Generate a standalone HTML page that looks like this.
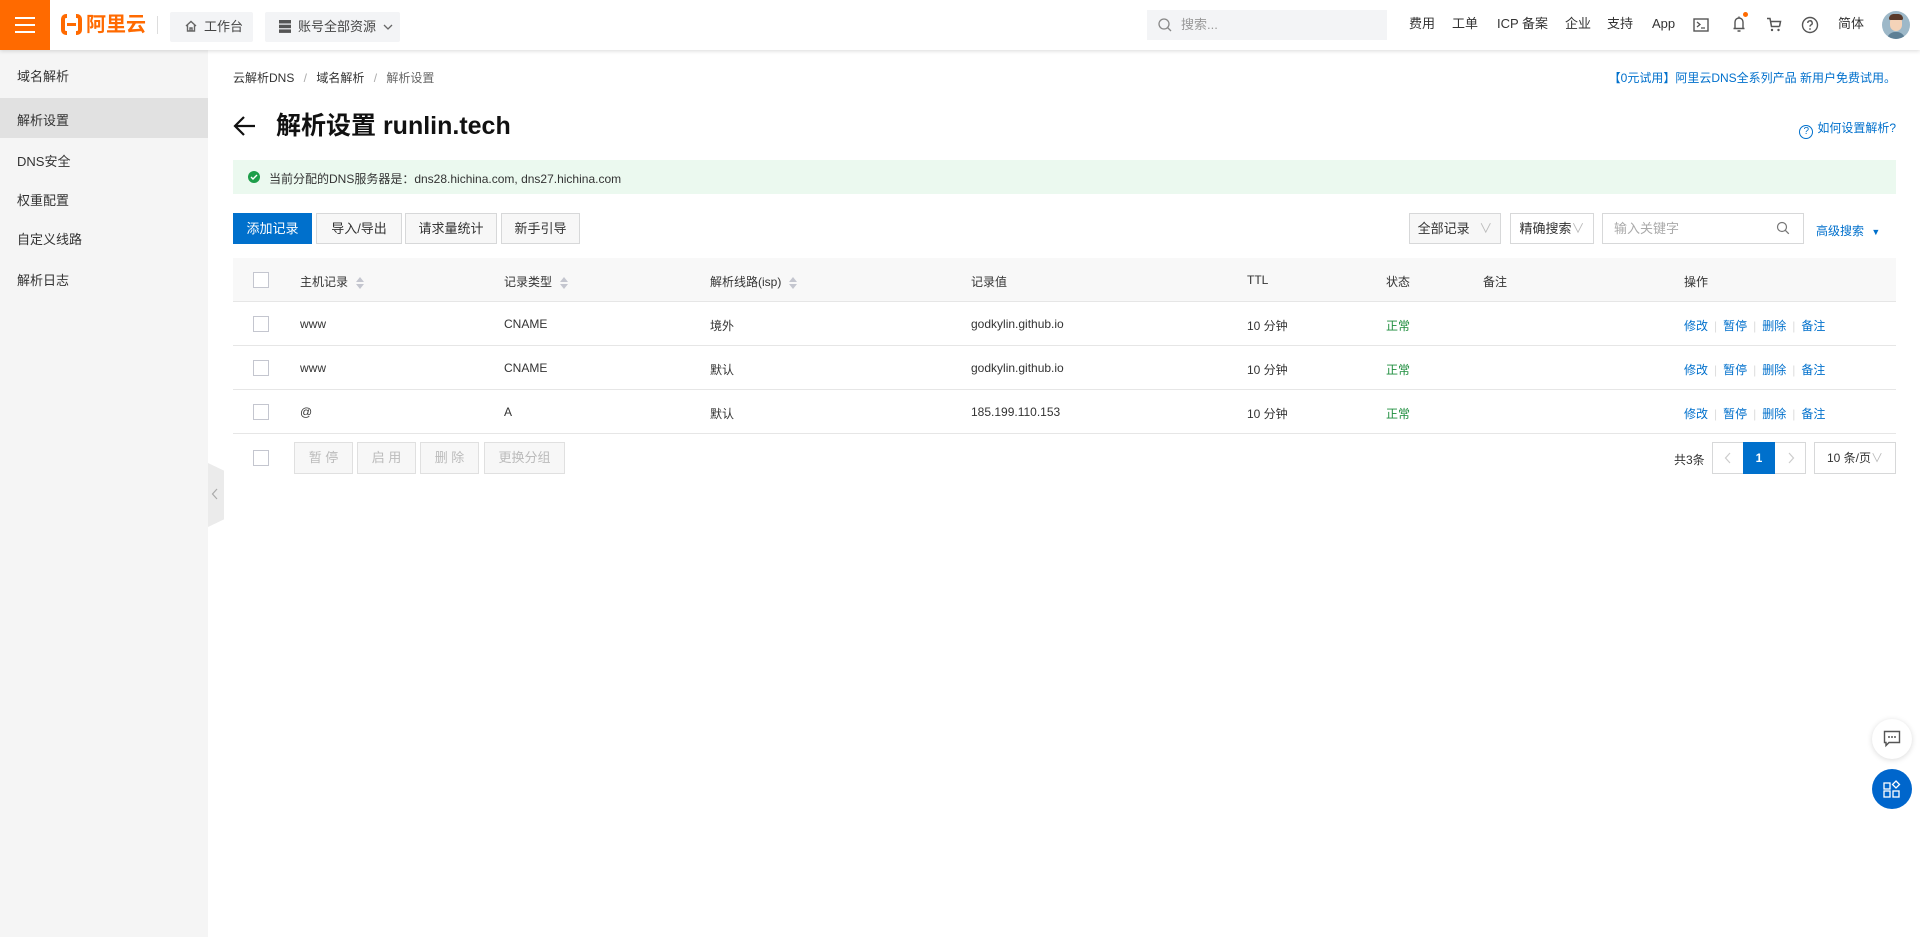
<!DOCTYPE html>
<html><head><meta charset="utf-8">
<style>
*{box-sizing:border-box;margin:0;padding:0}
body{width:1920px;height:937px;overflow:hidden;background:#fff;font-family:"Liberation Sans","Noto Sans CJK SC",sans-serif;font-size:12px;color:#333;position:relative}
.abs{position:absolute}
.top{position:absolute;left:0;top:0;width:1920px;height:50px;background:#fff;box-shadow:0 1px 4px rgba(0,0,0,.15);z-index:5}
.ham{position:absolute;left:0;top:0;width:50px;height:50px;background:#ff6a00}
.ham i{position:absolute;left:15px;width:20px;height:2px;background:#fff}
.tbtn{position:absolute;top:12px;height:30px;background:#f3f4f6;border-radius:2px;font-size:13px;color:#444;line-height:30px}
.nav{position:absolute;top:17px;font-size:13px;color:#333;line-height:14px}
.side{position:absolute;left:0;top:50px;width:208px;height:887px;background:#f5f5f5}
.side div{position:absolute;left:17px;font-size:13px;color:#333}
.btn{position:absolute;top:213px;height:31px;border:1px solid #d7d8d9;background:#f7f7f7;font-size:13px;color:#333;text-align:center;line-height:29px}
.th{position:absolute;top:273px;font-size:12px;color:#333}
.cb{position:absolute;left:253px;width:16px;height:16px;border:1px solid #c4c6cf;background:#fff}
.cell{position:absolute;font-size:12px;color:#333}
.line{position:absolute;left:233px;width:1663px;height:1px;background:#e6e6e6}
.ok{color:#1e8e3e}
.op{position:absolute;left:1684px;font-size:12px;color:#0070cc}
.op span.s{color:#ddd;margin:0 6px}
.sort{display:inline-block;vertical-align:middle;margin-left:8px;width:8px;height:12px;position:relative}
.sort:before{content:"";position:absolute;top:0;left:0;border:4px solid transparent;border-bottom:5px solid #c4c6cf;border-top:0}
.sort:after{content:"";position:absolute;bottom:0;left:0;border:4px solid transparent;border-top:5px solid #c4c6cf;border-bottom:0}
.dbtn{position:absolute;top:442px;height:32px;border:1px solid #e0e0e0;background:#f7f7f7;color:#bbb;font-size:13px;text-align:center;line-height:30px}
</style></head><body>
<div class="top">
  <div class="ham"><i style="top:17px"></i><i style="top:24px"></i><i style="top:31px"></i></div>
  <div class="abs" style="left:61px;top:14px;width:21px;height:21px;border:4px solid #ff6a00;border-radius:5px"></div>
  <div class="abs" style="left:67px;top:14px;width:9px;height:21px;background:#fff"></div>
  <div class="abs" style="left:67px;top:23px;width:9px;height:3px;background:#ff6a00"></div>
  <div class="abs" style="left:86px;top:12px;font-size:20px;font-weight:bold;color:#ff6a00;line-height:26px">阿里云</div>
  <div class="abs" style="left:157px;top:16px;width:1px;height:18px;background:#ddd"></div>
  <div class="tbtn" style="left:170px;width:83px;padding-left:14px"><svg width="14" height="14" viewBox="0 0 14 14" style="vertical-align:-2px;margin-right:6px"><path d="M2 7L7 2.5 12 7M3.5 6v6h7V6M6 12V9h2v3" fill="none" stroke="#666" stroke-width="1.4"/></svg>工作台</div>
  <div class="tbtn" style="left:265px;width:135px;padding-left:14px"><svg width="12" height="13" viewBox="0 0 12 13" style="vertical-align:-2px;margin-right:7px"><rect x="0" y="0" width="12" height="3.5" fill="#555"/><rect x="0" y="4.7" width="12" height="3.5" fill="#555"/><rect x="0" y="9.4" width="12" height="3.5" fill="#555"/></svg>账号全部资源 <svg width="10" height="8" viewBox="0 0 10 8" style="margin-left:3px"><path d="M1 2l4 4 4-4" fill="none" stroke="#666" stroke-width="1.3"/></svg></div>
  <div class="abs" style="left:1147px;top:10px;width:240px;height:30px;background:#f3f4f6;color:#999;font-size:13px;line-height:30px;padding-left:34px">搜索...</div>
  <svg class="abs" style="left:1157px;top:17px" width="16" height="16" viewBox="0 0 16 16"><circle cx="7" cy="7" r="5" fill="none" stroke="#888" stroke-width="1.3"/><path d="M10.5 10.5l3.5 3.5" stroke="#888" stroke-width="1.3"/></svg>
  <div class="nav" style="left:1409px">费用</div>
  <div class="nav" style="left:1452px">工单</div>
  <div class="nav" style="left:1497px">ICP 备案</div>
  <div class="nav" style="left:1565px">企业</div>
  <div class="nav" style="left:1607px">支持</div>
  <div class="nav" style="left:1652px">App</div>
  <svg class="abs" style="left:1693px;top:18px" width="16" height="14" viewBox="0 0 16 14"><rect x="1" y="1" width="14" height="12" fill="none" stroke="#555" stroke-width="1.4"/><path d="M4 4l3 2.5L4 9M8 10h4" fill="none" stroke="#555" stroke-width="1.3"/></svg>
  <svg class="abs" style="left:1731px;top:15px" width="16" height="18" viewBox="0 0 16 18"><path d="M4 13V7a4 4 0 0 1 8 0v6M2.5 13.5h11M6.5 16h3M8 1.5v1.5" fill="none" stroke="#555" stroke-width="1.4"/></svg>
  <div class="abs" style="left:1743px;top:12px;width:5px;height:5px;border-radius:50%;background:#ff6a00"></div>
  <svg class="abs" style="left:1766px;top:17px" width="16" height="15" viewBox="0 0 16 15"><path d="M1 1.5h3l1.5 8h8M5 4.5h9.5l-1 5" fill="none" stroke="#555" stroke-width="1.5"/><circle cx="6" cy="13" r="1.2" fill="#555"/><circle cx="12.5" cy="13" r="1.2" fill="#555"/></svg>
  <svg class="abs" style="left:1801px;top:16px" width="18" height="18" viewBox="0 0 18 18"><circle cx="9" cy="9" r="7.5" fill="none" stroke="#555" stroke-width="1.4"/><path d="M6.8 7a2.2 2.2 0 1 1 3 2c-.7.3-.8.8-.8 1.6" fill="none" stroke="#555" stroke-width="1.4"/><circle cx="9" cy="13" r=".9" fill="#555"/></svg>
  <div class="nav" style="left:1838px">简体</div>
  <div class="abs" style="left:1882px;top:11px;width:28px;height:28px;border-radius:50%;background:#9db8c8;overflow:hidden">
    <div class="abs" style="left:8px;top:5px;width:12px;height:15px;border-radius:6px;background:#f4d3b8"></div>
    <div class="abs" style="left:7px;top:3px;width:14px;height:6px;border-radius:6px 6px 2px 2px;background:#5a3a2a"></div>
    <div class="abs" style="left:5px;top:21px;width:18px;height:10px;border-radius:8px 8px 0 0;background:#5d7f95"></div>
  </div>
</div>

<div class="side">
  <div style="top:16px">域名解析</div>
  <div style="left:0;top:48px;width:208px;height:40px;background:#e1e1e1"></div>
  <div style="top:60px">解析设置</div>
  <div style="top:101px">DNS安全</div>
  <div style="top:140px">权重配置</div>
  <div style="top:179px">自定义线路</div>
  <div style="top:220px">解析日志</div>
</div>
<div class="abs" style="left:208px;top:463px;width:16px;height:64px;background:#ebebeb;clip-path:polygon(0 0,100% 12%,100% 88%,0 100%)"></div>
<svg class="abs" style="left:211px;top:488px" width="8" height="12" viewBox="0 0 8 12"><path d="M6 1L1.5 6 6 11" fill="none" stroke="#aaa" stroke-width="1.2"/></svg>

<div class="abs" style="left:233px;top:69px;font-size:12px;color:#333">云解析DNS <span style="color:#aaa;margin:0 6px">/</span> 域名解析 <span style="color:#aaa;margin:0 6px">/</span> <span style="color:#666">解析设置</span></div>
<div class="abs" style="right:24px;top:69px;font-size:12px;color:#0070cc">【0元试用】阿里云DNS全系列产品 新用户免费试用。</div>

<svg class="abs" style="left:233px;top:115px" width="24" height="22" viewBox="0 0 24 22"><path d="M22 11H3M11 2L2 11l9 9" fill="none" stroke="#111" stroke-width="2.2"/></svg>
<div class="abs" style="left:276px;top:110px;font-size:25px;font-weight:bold;color:#111;line-height:32px">解析设置 runlin.tech</div>
<div class="abs" style="right:24px;top:119px;font-size:12px;color:#0070cc"><span style="display:inline-block;width:14px;height:14px;border:1px solid #0070cc;border-radius:50%;font-size:10px;text-align:center;line-height:12px;margin-right:4px;vertical-align:-2px">?</span>如何设置解析?</div>

<div class="abs" style="left:233px;top:160px;width:1663px;height:34px;background:#ebf9ef"></div>
<div class="abs" style="left:248px;top:171px;width:12px;height:12px;border-radius:50%;background:#1e9e4a"></div>
<svg class="abs" style="left:250px;top:173px" width="8" height="8" viewBox="0 0 8 8"><path d="M1 4l2 2 4-4" fill="none" stroke="#fff" stroke-width="1.4"/></svg>
<div class="abs" style="left:269px;top:170px;font-size:12px;color:#333">当前分配的DNS服务器是：dns28.hichina.com, dns27.hichina.com</div>

<div class="btn" style="left:233px;width:79px;background:#0070cc;border-color:#0070cc;color:#fff">添加记录</div>
<div class="btn" style="left:316px;width:86px">导入/导出</div>
<div class="btn" style="left:405px;width:92px">请求量统计</div>
<div class="btn" style="left:501px;width:79px">新手引导</div>

<div class="btn" style="left:1409px;width:92px;line-height:29px">全部记录 <span style="color:#bbb;margin-left:6px">∨</span></div>
<div class="btn" style="left:1510px;width:84px;background:#fff">精确搜索<span style="color:#bbb">∨</span></div>
<div class="btn" style="left:1602px;width:202px;background:#fff;color:#aaa;text-align:left;padding-left:11px">输入关键字</div>
<svg class="abs" style="left:1776px;top:221px" width="14" height="14" viewBox="0 0 14 14"><circle cx="6" cy="6" r="4.5" fill="none" stroke="#777" stroke-width="1.2"/><path d="M9.3 9.3l3.5 3.5" stroke="#777" stroke-width="1.3"/></svg>
<div class="abs" style="left:1816px;top:222px;font-size:12px;color:#0070cc">高级搜索 <span style="font-size:9px;margin-left:4px">▼</span></div>

<div class="abs" style="left:233px;top:258px;width:1663px;height:43px;background:#f8f8f8"></div>
<div class="line" style="top:301px"></div>
<div class="cb" style="top:272px"></div>
<div class="th" style="left:300px">主机记录<span class="sort"></span></div>
<div class="th" style="left:504px">记录类型<span class="sort"></span></div>
<div class="th" style="left:710px">解析线路(isp)<span class="sort"></span></div>
<div class="th" style="left:971px">记录值</div>
<div class="th" style="left:1247px">TTL</div>
<div class="th" style="left:1386px">状态</div>
<div class="th" style="left:1483px">备注</div>
<div class="th" style="left:1684px">操作</div>

<div class="cb" style="top:316px"></div>
<div class="cell" style="left:300px;top:317px">www</div>
<div class="cell" style="left:504px;top:317px">CNAME</div>
<div class="cell" style="left:710px;top:317px">境外</div>
<div class="cell" style="left:971px;top:317px">godkylin.github.io</div>
<div class="cell" style="left:1247px;top:317px">10 分钟</div>
<div class="cell ok" style="left:1386px;top:317px">正常</div>
<div class="op" style="top:317px">修改<span class="s">|</span>暂停<span class="s">|</span>删除<span class="s">|</span>备注</div>
<div class="line" style="top:345px"></div>

<div class="cb" style="top:360px"></div>
<div class="cell" style="left:300px;top:361px">www</div>
<div class="cell" style="left:504px;top:361px">CNAME</div>
<div class="cell" style="left:710px;top:361px">默认</div>
<div class="cell" style="left:971px;top:361px">godkylin.github.io</div>
<div class="cell" style="left:1247px;top:361px">10 分钟</div>
<div class="cell ok" style="left:1386px;top:361px">正常</div>
<div class="op" style="top:361px">修改<span class="s">|</span>暂停<span class="s">|</span>删除<span class="s">|</span>备注</div>
<div class="line" style="top:389px"></div>

<div class="cb" style="top:404px"></div>
<div class="cell" style="left:300px;top:405px">@</div>
<div class="cell" style="left:504px;top:405px">A</div>
<div class="cell" style="left:710px;top:405px">默认</div>
<div class="cell" style="left:971px;top:405px">185.199.110.153</div>
<div class="cell" style="left:1247px;top:405px">10 分钟</div>
<div class="cell ok" style="left:1386px;top:405px">正常</div>
<div class="op" style="top:405px">修改<span class="s">|</span>暂停<span class="s">|</span>删除<span class="s">|</span>备注</div>
<div class="line" style="top:433px"></div>

<div class="cb" style="top:450px"></div>
<div class="dbtn" style="left:294px;width:59px">暂 停</div>
<div class="dbtn" style="left:357px;width:59px">启 用</div>
<div class="dbtn" style="left:420px;width:59px">删 除</div>
<div class="dbtn" style="left:484px;width:81px">更换分组</div>

<div class="abs" style="left:1674px;top:451px;font-size:12px;color:#333">共3条</div>
<div class="abs" style="left:1712px;top:442px;width:94px;height:32px;border:1px solid #d7d8d9"></div>
<svg class="abs" style="left:1724px;top:452px" width="8" height="12" viewBox="0 0 8 12"><path d="M6 1L1.5 6 6 11" fill="none" stroke="#ccc" stroke-width="1.2"/></svg>
<div class="abs" style="left:1743px;top:442px;width:32px;height:32px;background:#0070cc;color:#fff;font-weight:bold;text-align:center;line-height:32px">1</div>
<svg class="abs" style="left:1787px;top:452px" width="8" height="12" viewBox="0 0 8 12"><path d="M2 1l4.5 5L2 11" fill="none" stroke="#ccc" stroke-width="1.2"/></svg>
<div class="abs" style="left:1814px;top:442px;width:82px;height:32px;border:1px solid #d7d8d9;font-size:12px;line-height:30px;padding-left:12px;color:#333">10 条/页<span style="color:#bbb">∨</span></div>

<div class="abs" style="left:1872px;top:719px;width:40px;height:40px;border-radius:50%;background:#fff;box-shadow:0 1px 6px rgba(0,0,0,.15)"></div>
<svg class="abs" style="left:1883px;top:730px" width="18" height="18" viewBox="0 0 18 18"><path d="M1.5 1.5h15v11H6l-3 3v-3H1.5z" fill="none" stroke="#555" stroke-width="1.4"/><circle cx="6" cy="7" r="1" fill="#555"/><circle cx="9" cy="7" r="1" fill="#555"/><circle cx="12" cy="7" r="1" fill="#555"/></svg>
<div class="abs" style="left:1872px;top:769px;width:40px;height:40px;border-radius:50%;background:#0066cc"></div>
<svg class="abs" style="left:1883px;top:780px" width="18" height="18" viewBox="0 0 18 18"><rect x="1" y="3" width="6" height="6" fill="none" stroke="#fff" stroke-width="1.3"/><rect x="1" y="11" width="6" height="6" fill="none" stroke="#fff" stroke-width="1.3"/><rect x="10" y="11" width="6" height="6" fill="none" stroke="#fff" stroke-width="1.3"/><path d="M13 1l3.5 3.5L13 8 9.5 4.5z" fill="none" stroke="#fff" stroke-width="1.3"/></svg>
</body></html>
